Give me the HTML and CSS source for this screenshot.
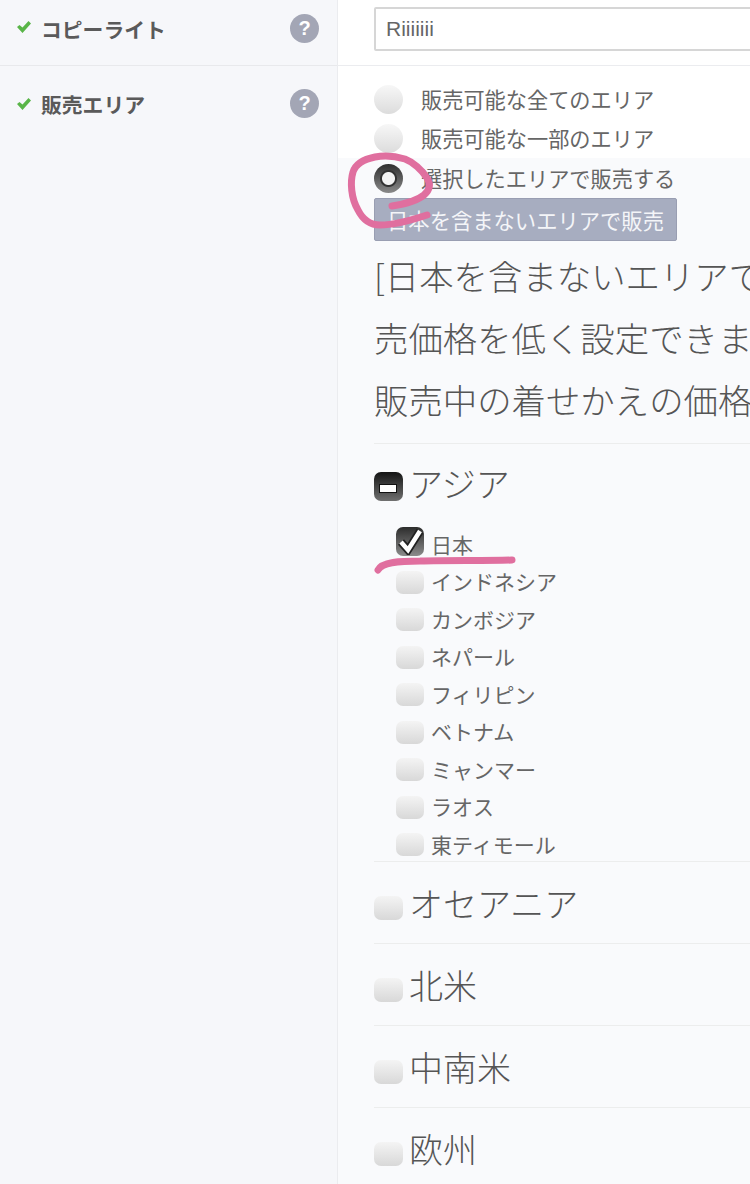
FILE: index.html
```html
<!DOCTYPE html>
<html lang="ja">
<head>
<meta charset="utf-8">
<title>販売エリア</title>
<link rel="stylesheet" href="styles.css">
</head>
<body>
<div class="page">
  <aside class="side">
    <div class="side-row first">
      <svg class="ok" viewBox="0 0 14 12"><path d="M0 6l2.500-2 3 2.500L11.500 0 14 2.500 5.500 12z"/></svg>
      <span class="label">コピーライト</span>
      <span class="help">?</span>
    </div>
    <div class="side-row">
      <svg class="ok" viewBox="0 0 14 12"><path d="M0 6l2.500-2 3 2.500L11.500 0 14 2.500 5.500 12z"/></svg>
      <span class="label">販売エリア</span>
      <span class="help">?</span>
    </div>
  </aside>
  <main class="main">
    <div class="copy-row"><div class="input">Riiiiiii</div></div>
    <div class="options">
      <div class="radio-row"><span class="radio"></span><span class="radio-text">販売可能な全てのエリア</span></div>
      <div class="radio-row"><span class="radio"></span><span class="radio-text">販売可能な一部のエリア</span></div>
    </div>
    <section class="selected">
      <div class="radio-row"><span class="radio on"></span><span class="radio-text">選択したエリアで販売する</span></div>
      <div class="button">日本を含まないエリアで販売</div>
      <div class="note">
        <p>[日本を含まないエリアで販売すると、販</p>
        <p>売価格を低く設定できます。</p>
        <p>販売中の着せかえの価格は変更できません</p>
      </div>
      <div class="region open">
        <div class="region-head"><span class="box big minus"></span><span>アジア</span></div>
        <ul class="countries">
          <li><span class="box checked"><svg viewBox="0 0 28 28"><path class="tick-o" d="M5 15l7 8L24 4"/><path class="tick-i" d="M5 15l7 8L24 4"/></svg></span><span class="name">日本</span></li>
          <li><span class="box"></span><span class="name">インドネシア</span></li>
          <li><span class="box"></span><span class="name">カンボジア</span></li>
          <li><span class="box"></span><span class="name">ネパール</span></li>
          <li><span class="box"></span><span class="name">フィリピン</span></li>
          <li><span class="box"></span><span class="name">ベトナム</span></li>
          <li><span class="box"></span><span class="name">ミャンマー</span></li>
          <li><span class="box"></span><span class="name">ラオス</span></li>
          <li><span class="box"></span><span class="name">東ティモール</span></li>
        </ul>
      </div>
      <div class="region"><div class="region-head"><span class="box big"></span><span>オセアニア</span></div></div>
      <div class="region"><div class="region-head"><span class="box big"></span><span>北米</span></div></div>
      <div class="region"><div class="region-head"><span class="box big"></span><span>中南米</span></div></div>
      <div class="region"><div class="region-head"><span class="box big"></span><span>欧州</span></div></div>
    </section>
  </main>
  <svg class="ink" viewBox="0 0 750 1184">
    <path d="M392 206C405 204 418 200 424 195C430 190 431 184 427 178C422 170 413 162 405 159C395 156 385 155 375 157C365 159 356 163 353 172C350 182 351 198 358 210C363 220 370 225 380 225C395 225 415 219 427 215"/>
    <path d="M378 570C382 562 400 561 420 561C450 560 485 561 512 560"/>
  </svg>
</div>
</body>
</html>
```
FILE: styles.css
```css
* { box-sizing: border-box; }
html, body { margin: 0; padding: 0; }
body {
  width: 750px;
  height: 1184px;
  overflow: hidden;
  background: #fff;
  color: #666;
  font-family: "Noto Sans CJK JP", "Liberation Sans", sans-serif;
}
.page { position: relative; display: flex; width: 750px; height: 1184px; overflow: hidden; }
.side { flex: 0 0 338px; background: #f6f7fa; border-right: 1px solid #ebecef; }
.side-row { display: flex; height: 76px; padding: 23px 18px 0 17px; }
.side-row.first { align-items: center; height: 66px; padding: 0 18px 8px 17px; border-bottom: 1px solid #e8e9ec; }
.ok { flex: none; width: 14px; height: 12px; margin: 9px 10px 0 0; fill: #59b548; }
.first .ok { margin-top: 0; margin-bottom: 4px; }
.label { flex: 1; font-size: 20.800px; font-weight: 700; line-height: 30px; color: #5a5a5a; }
.help {
  flex: none; width: 29px; height: 29px; border-radius: 50%;
  background: #a3a6b5; color: #fff;
  font: 700 20px/29px "Liberation Sans", sans-serif; text-align: center;
}
.main { flex: 1; min-width: 0; }
.copy-row { height: 66px; padding: 7px 0 0 36px; border-bottom: 1px solid #ebecef; }
.input {
  width: 420px; height: 44px; padding-left: 10px;
  border: 2px solid #d6d6d6; border-radius: 2px;
  font: 21px/40px "Liberation Sans", sans-serif; color: #666;
}
.options { height: 92px; padding: 14px 0 0 36px; }
.radio-row { display: flex; align-items: center; height: 39px; font-size: 21.200px; line-height: 35px; white-space: nowrap; }
.radio {
  flex: none; width: 29px; height: 29px; margin-right: 18px; border-radius: 50%;
  background: linear-gradient(#f7f7f7, #dcdcdc);
}
.radio.on {
  background: radial-gradient(circle at 50% 50%, #f4f4f4 0 6px, #333 7px 8px, transparent 9px), linear-gradient(#2f2f2f, #8a8a8a);
}
.radio-text { margin-top: -2px; }
.selected { height: 1026px; padding-left: 36px; background: #f9fafc; }
.selected > .radio-row { height: 40px; }
.button {
  width: 303px; height: 43px; border: 1px solid #999eb2; border-radius: 2px;
  background: #a7adc0; color: #f4f5f8;
  font-size: 21.300px; line-height: 41px; text-align: center; white-space: nowrap;
}
.note { height: 203px; overflow: hidden; border-bottom: 1px solid #eceded; padding-top: 3px; }
.note p { margin: 0; font-size: 34.400px; font-weight: 300; line-height: 62px; white-space: nowrap; color: #555; }
.region { min-height: 82px; border-bottom: 1px solid #eceded; }
.region.open { height: 418px; }
.region-head { display: flex; align-items: center; gap: 6px; height: 81px; font-size: 34px; font-weight: 300; line-height: 81px; white-space: nowrap; color: #555; }
.open .region-head { height: 78px; line-height: 78px; }
.box {
  display: block; flex: none; width: 28px; height: 23px; border-radius: 7px;
  background: linear-gradient(#f4f4f4, #d8d8d8);
}
.box.big { width: 29px; height: 24px; margin-top: 11px; }
.box.minus {
  position: relative; height: 29px; margin-top: 7px;
  background: linear-gradient(#141414, #707070);
}
.box.minus::after {
  content: ""; position: absolute; left: 5px; right: 6px; top: 12px; height: 7px;
  border: 1px solid #111; background: #fff;
}
.countries { list-style: none; margin: 4px 0 0 22px; padding: 0; }
.countries li { display: flex; align-items: center; gap: 7px; height: 37.500px; font-size: 21px; white-space: nowrap; }
.name { margin-top: -2px; }
.box.checked { height: 29px; margin-bottom: 7px; background: linear-gradient(#2c2c2c, #8b8b8b); }
.box.checked svg { display: block; width: 28px; height: 28px; fill: none; }
.tick-o { stroke: #222; stroke-width: 8; }
.tick-i { stroke: #fff; stroke-width: 4.500; }
.ink { position: absolute; left: 0; top: 0; width: 750px; height: 1184px; fill: none; stroke: #e06f9f; stroke-width: 7; stroke-linecap: round; stroke-linejoin: round; pointer-events: none; }
```
